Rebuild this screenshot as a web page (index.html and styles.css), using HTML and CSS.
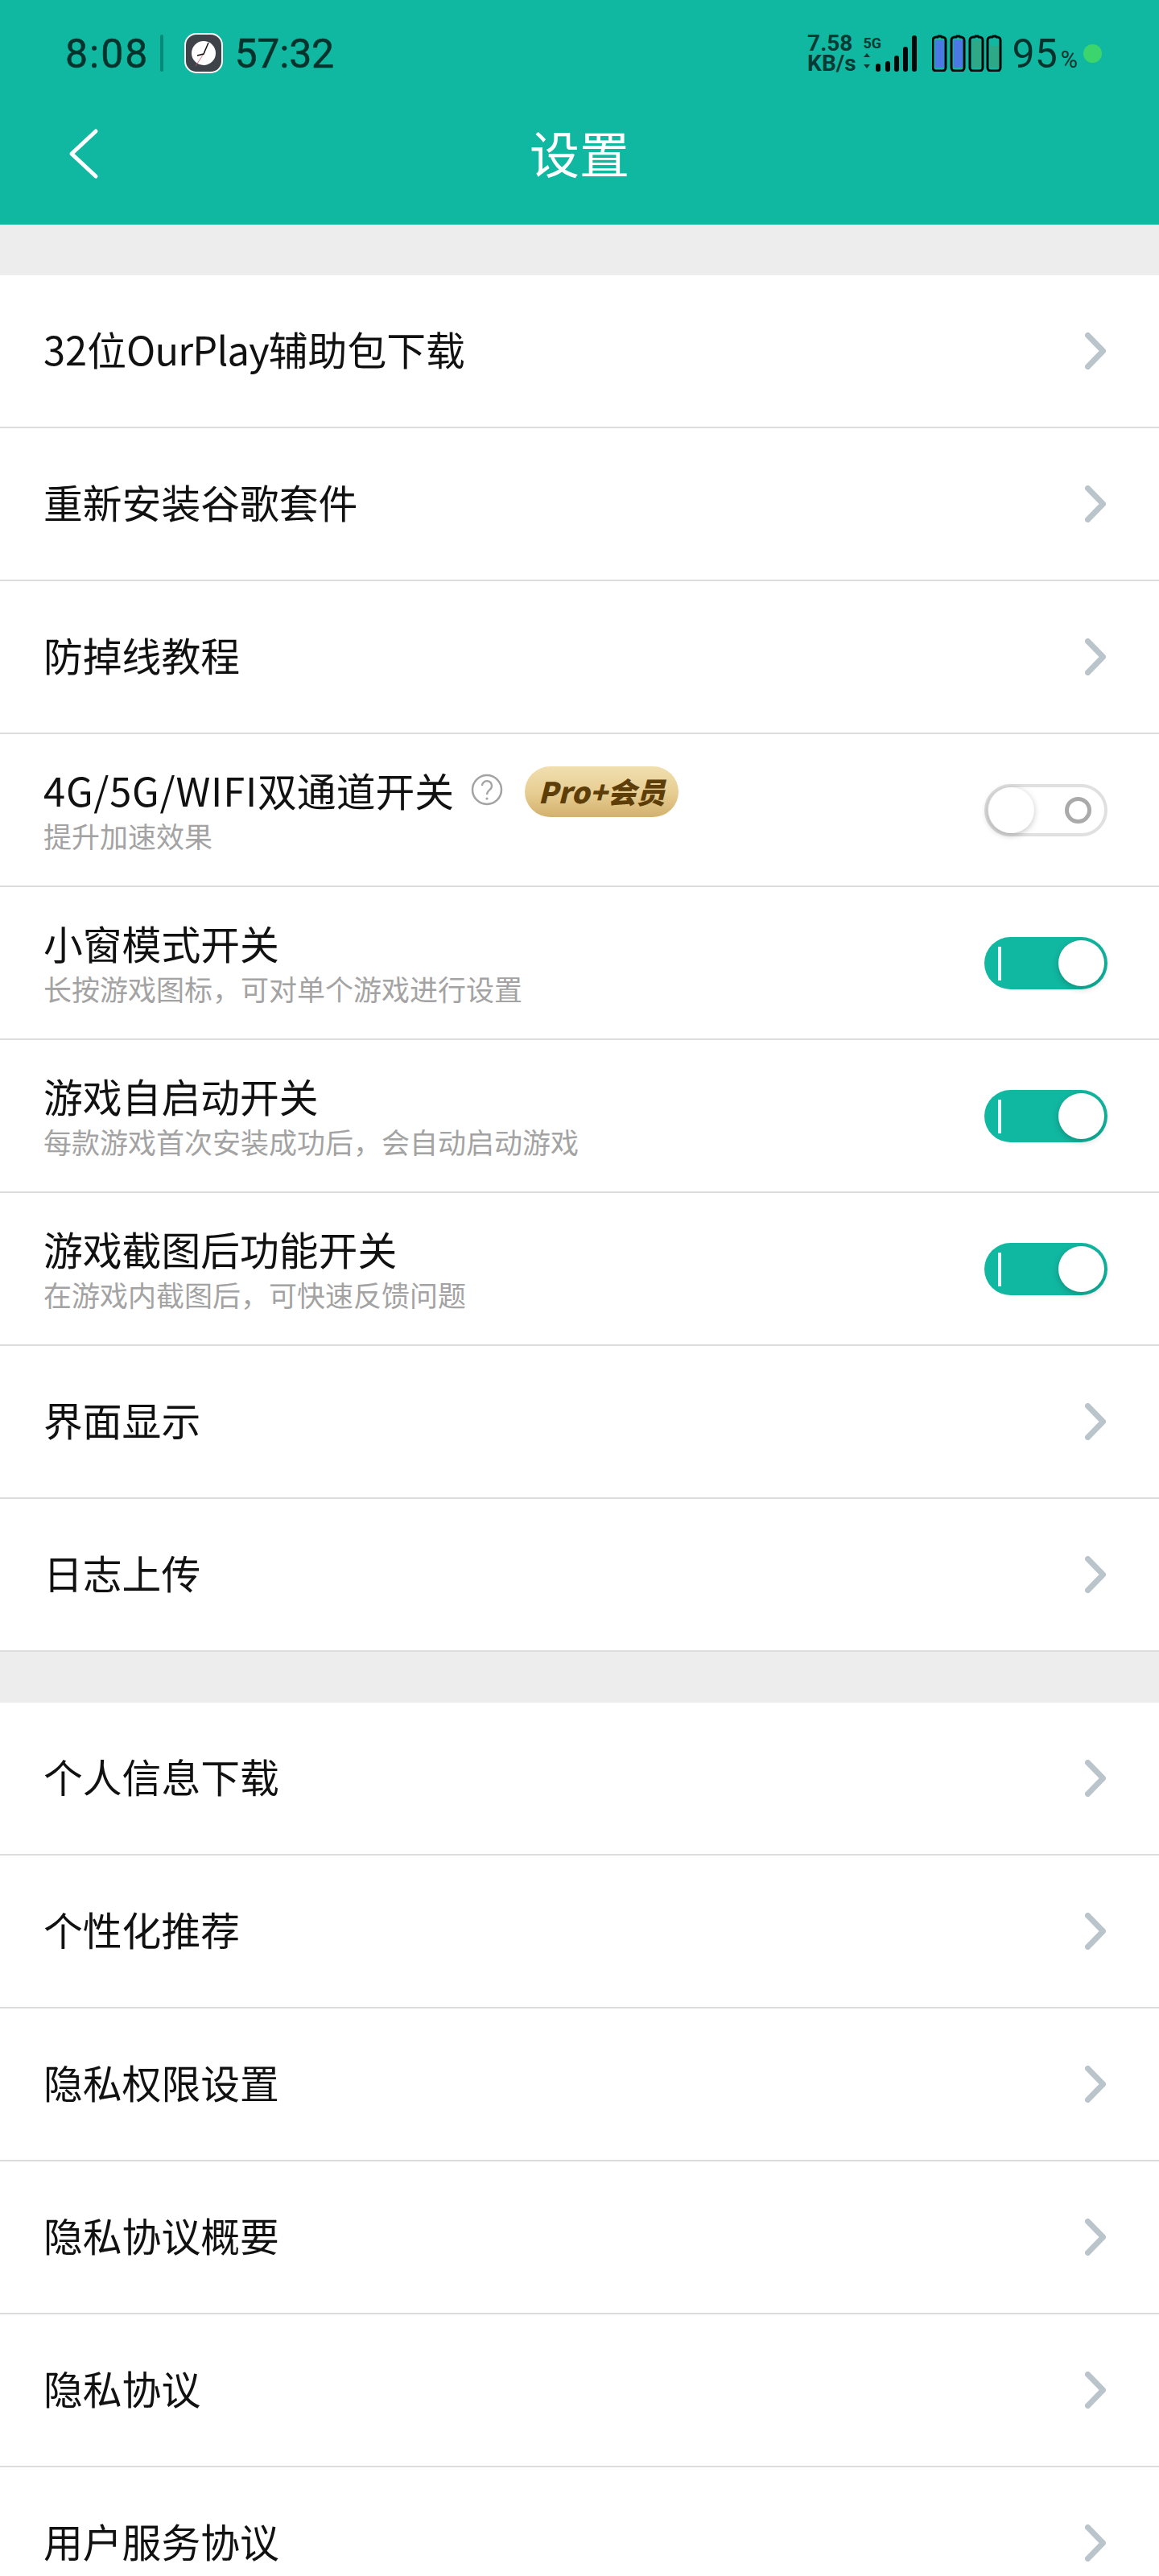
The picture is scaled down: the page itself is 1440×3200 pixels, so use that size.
FILE: index.html
```html
<!DOCTYPE html>
<html lang="zh-CN">
<head>
<meta charset="utf-8">
<title>设置</title>
<link rel="stylesheet" href="styles.css">
</head>
<body>
<svg class="defs" width="0" height="0" aria-hidden="true">
  <symbol id="chev" viewBox="0 0 26 46"><path d="M3.500 3.500 L22.500 23 L3.500 42.500" fill="none" stroke="#b9c4cb" stroke-width="7" stroke-linecap="round" stroke-linejoin="round"/></symbol>
</svg>
<header class="head">
  <div class="status">
    <span class="clock clock-wide">8:08</span>
    <span class="sep"></span>
    <svg class="timer" width="48" height="50" viewBox="0 0 48 50">
      <rect x="1" y="1" width="46" height="48" rx="14" fill="#3e434a" stroke="#fff" stroke-width="2"/>
      <circle cx="24" cy="25" r="15" fill="#fff"/>
      <path d="M14 41 L24 26" fill="none" stroke="#d8505a" stroke-width="0.800"/>
      <path d="M30 12 L24 26 L16 28" fill="none" stroke="#111" stroke-width="1.500"/>
    </svg>
    <span class="clock clock-tight">57:32</span>
    <div class="status-right">
      <div class="speed"><span>7.58</span><span>KB/s</span></div>
      <div class="net">
        <span class="fiveg">5G</span>
        <svg class="signal" width="66" height="46" viewBox="0 0 66 46">
          <path class="arrow" d="M4 23 L8 28 H0 Z M0 37 H8 L4 42 Z"/>
          <rect x="15" y="36" width="6" height="10" rx="3"/>
          <rect x="27" y="33" width="6" height="13" rx="3"/>
          <rect x="38" y="26" width="6" height="20" rx="3"/>
          <rect x="49" y="15" width="6" height="31" rx="3"/>
          <rect x="60" y="1" width="6" height="45" rx="3"/>
        </svg>
      </div>
      <svg class="batteries" width="87" height="46" viewBox="0 0 87 46">
        <g>
          <path class="bat" d="M6 3 h1 l1 -1 h3 l1 1 h1 a4 4 0 0 1 4 4 v34 a4 4 0 0 1 -4 4 h-8 a4 4 0 0 1 -4 -4 v-34 a4 4 0 0 1 4 -4 z"/>
          <rect x="4" y="7" width="11" height="34" fill="#4a78e4"/>
        </g>
        <g transform="translate(23 0)">
          <path class="bat" d="M6 3 h1 l1 -1 h3 l1 1 h1 a4 4 0 0 1 4 4 v34 a4 4 0 0 1 -4 4 h-8 a4 4 0 0 1 -4 -4 v-34 a4 4 0 0 1 4 -4 z"/>
          <rect x="4" y="7" width="11" height="34" fill="#4a78e4"/>
        </g>
        <g transform="translate(46 0)">
          <path class="bat" d="M6 3 h1 l1 -1 h3 l1 1 h1 a4 4 0 0 1 4 4 v34 a4 4 0 0 1 -4 4 h-8 a4 4 0 0 1 -4 -4 v-34 a4 4 0 0 1 4 -4 z"/>
          <rect x="4" y="7" width="11" height="34" fill="#2fa888"/>
        </g>
        <g transform="translate(68 0)">
          <path class="bat" d="M6 3 h1 l1 -1 h3 l1 1 h1 a4 4 0 0 1 4 4 v34 a4 4 0 0 1 -4 4 h-8 a4 4 0 0 1 -4 -4 v-34 a4 4 0 0 1 4 -4 z"/>
          <rect x="4" y="14" width="11" height="27" fill="#2fa888"/>
        </g>
      </svg>
      <span class="pct">95<small>%</small></span>
      <span class="dot"></span>
    </div>
  </div>
  <nav class="nav">
    <svg class="back" width="40" height="64" viewBox="0 0 40 64"><path d="M36 4 L6 32 L36 60" fill="none" stroke="#fff" stroke-width="5" stroke-linecap="round" stroke-linejoin="round"/></svg>
    <h1 class="title">设置</h1>
  </nav>
</header>
<main>
  <section class="group">
    <div class="row"><span class="label">32位<span class="tight">OurPlay</span>辅助包下载</span><svg class="chev"><use href="#chev"/></svg></div>
    <div class="row"><span class="label">重新安装谷歌套件</span><svg class="chev"><use href="#chev"/></svg></div>
    <div class="row"><span class="label">防掉线教程</span><svg class="chev"><use href="#chev"/></svg></div>
    <div class="row">
      <div class="stack">
        <div class="label-line">
          <span class="label"><span class="loose">4G/5G/WIFI</span>双通道开关</span>
          <svg class="help" width="40" height="40" viewBox="0 0 40 40">
            <circle cx="20" cy="20" r="18" fill="none" stroke="#a3a3a3" stroke-width="2.500"/>
            <path d="M14 15 a6 6 0 1 1 9.500 5 c-2.500 2 -3.500 3 -3.500 6" fill="none" stroke="#a3a3a3" stroke-width="2.200"/>
            <circle cx="20" cy="31" r="1.600" fill="#a3a3a3"/>
          </svg>
          <span class="badge">Pro+会员</span>
        </div>
        <span class="sub">提升加速效果</span>
      </div>
      <span class="switch off"><span class="ring"></span><span class="knob"></span></span>
    </div>
    <div class="row">
      <div class="stack">
        <span class="label">小窗模式开关</span>
        <span class="sub">长按游戏图标，可对单个游戏进行设置</span>
      </div>
      <span class="switch on"><span class="tick"></span><span class="knob"></span></span>
    </div>
    <div class="row">
      <div class="stack">
        <span class="label">游戏自启动开关</span>
        <span class="sub">每款游戏首次安装成功后，会自动启动游戏</span>
      </div>
      <span class="switch on"><span class="tick"></span><span class="knob"></span></span>
    </div>
    <div class="row">
      <div class="stack">
        <span class="label">游戏截图后功能开关</span>
        <span class="sub">在游戏内截图后，可快速反馈问题</span>
      </div>
      <span class="switch on"><span class="tick"></span><span class="knob"></span></span>
    </div>
    <div class="row"><span class="label">界面显示</span><svg class="chev"><use href="#chev"/></svg></div>
    <div class="row"><span class="label">日志上传</span><svg class="chev"><use href="#chev"/></svg></div>
  </section>
  <section class="group">
    <div class="row"><span class="label">个人信息下载</span><svg class="chev"><use href="#chev"/></svg></div>
    <div class="row"><span class="label">个性化推荐</span><svg class="chev"><use href="#chev"/></svg></div>
    <div class="row"><span class="label">隐私权限设置</span><svg class="chev"><use href="#chev"/></svg></div>
    <div class="row"><span class="label">隐私协议概要</span><svg class="chev"><use href="#chev"/></svg></div>
    <div class="row"><span class="label">隐私协议</span><svg class="chev"><use href="#chev"/></svg></div>
    <div class="row"><span class="label">用户服务协议</span><svg class="chev"><use href="#chev"/></svg></div>
  </section>
</main>
</body>
</html>
```

FILE: styles.css
```css
* { box-sizing: border-box; }
html, body { margin: 0; height: 3200px; overflow: hidden; }
body {
  background: #ededed;
  font-family: "Noto Sans CJK SC", "Noto Sans", sans-serif;
  color: #111;
}
.defs { position: absolute; }

.head { background: #11b8a1; height: 279px; }
.status {
  height: 102px;
  padding: 30px 71px 0 81px;
  display: flex;
  align-items: center;
  color: #04332e;
}
.clock {
  font-family: "Roboto", sans-serif;
  font-size: 50px;
  font-weight: 400;
  line-height: 72px;
  padding-top: 2px;
  -webkit-text-stroke: 0.500px #04332e;
}
.clock-wide { letter-spacing: 2px; }
.clock-tight { letter-spacing: -0.200px; }
.sep { width: 4px; height: 46px; border-radius: 2px; background: #058a78; margin: 0 26px 0 14px; }
.timer { margin-right: 14px; }
.status-right { margin-left: auto; display: flex; align-items: center; }
.speed {
  display: flex;
  flex-direction: column;
  font-family: "Roboto", sans-serif;
  font-weight: 700;
  font-size: 28px;
  line-height: 25px;
  color: #063a34;
  margin-right: 9px;
}
.net { position: relative; width: 66px; height: 46px; margin-right: 19px; }
.fiveg {
  position: absolute;
  left: 0;
  top: 2px;
  font-family: "Roboto", sans-serif;
  font-weight: 700;
  font-size: 18px;
  line-height: 18px;
  color: #063a34;
}
.signal { display: block; fill: #020807; }
.signal .arrow { fill: #063a34; }
.batteries { margin-right: 13px; }
.bat { fill: #11b8a1; stroke: #020807; stroke-width: 3px; }
.pct {
  font-family: "Roboto", sans-serif;
  font-size: 50px;
  line-height: 50px;
  color: #04332e;
  padding-top: 2px;
}
.pct small { font-size: 29px; line-height: 1; margin-left: 4px; }
.dot { width: 23px; height: 23px; border-radius: 50%; background: #3cd46c; margin-left: 7px; }

.nav { position: relative; height: 177px; display: flex; align-items: center; justify-content: center; }
.back { position: absolute; left: 83px; top: 57px; }
.title { margin: 0; font-weight: 400; font-size: 62px; line-height: 80px; margin-bottom: 4px; color: #fff; }

main { padding-top: 63px; }
.group { margin-bottom: 63px; background: #fff; }
.row {
  height: 190px;
  padding: 0 64px 0 54px;
  display: flex;
  align-items: center;
  justify-content: space-between;
  border-bottom: 2px solid #dcdcdc;
}
.label { font-size: 48.800px; line-height: 58px; color: #111; white-space: nowrap; }
.tight { letter-spacing: -0.800px; }
.loose { letter-spacing: 0.800px; }
.row > .label { margin-bottom: 7px; }
.chev { width: 26px; height: 46px; margin-right: 2px; flex: none; }
.stack { display: flex; flex-direction: column; gap: 6px; }
.label-line { display: flex; align-items: center; }
.help { margin: 0 27px 0 21px; flex: none; }
.badge {
  width: 191px;
  height: 63px;
  margin: -2px 0 -6px;
  border-radius: 32px;
  background: linear-gradient(180deg, #f1dfb0 0%, #e6cc90 55%, #d2b16e 100%);
  color: #5e3e08;
  font-family: "Noto Sans CJK SC", sans-serif;
  font-style: italic;
  font-weight: 900;
  font-size: 36px;
  line-height: 60px;
  text-align: center;
}
.sub { font-size: 35px; line-height: 44px; color: #a3a3a3; white-space: nowrap; }

.switch { position: relative; width: 153px; height: 65px; border-radius: 33px; flex: none; }
.switch.on { background: #11b8a1; }
.switch.off { background: #fff; border: 4px solid #e0e0e0; }
.knob {
  position: absolute;
  width: 57px;
  height: 57px;
  border-radius: 50%;
  background: #fff;
  box-shadow: 0 3px 8px rgba(0, 0, 0, 0.22);
}
.on .knob { right: 4px; top: 4px; }
.off .knob { left: 1px; top: 0; box-shadow: -1px 2px 8px rgba(0, 0, 0, 0.28); }
.tick { position: absolute; left: 17px; top: 12px; width: 4px; height: 42px; background: #e8fbf7; }
.ring {
  position: absolute;
  left: 96px;
  top: 12px;
  width: 33px;
  height: 33px;
  border-radius: 50%;
  border: 5px solid #aaa;
}
```
